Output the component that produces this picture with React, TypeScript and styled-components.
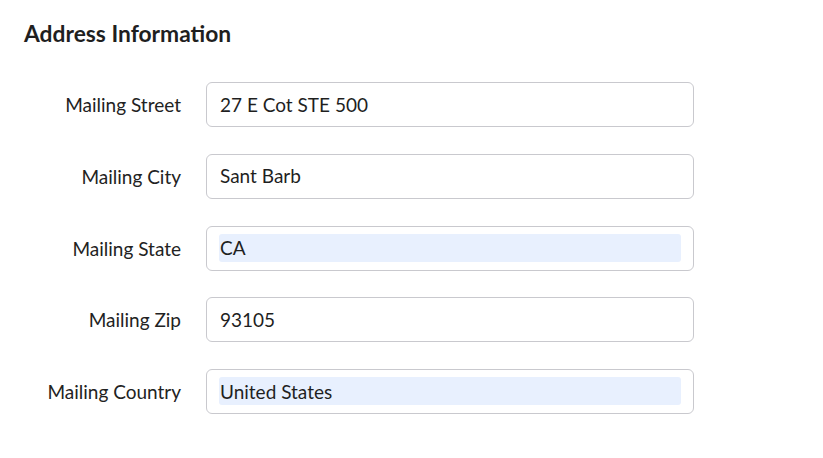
import React from "react";
import styled, { createGlobalStyle } from "styled-components";

const GlobalStyle = createGlobalStyle`
  body {
    margin: 0;
    background: #ffffff;
    font-family: Lato, "Open Sans", sans-serif;
    color: #1f1f1f;
  }
`;

const Section = styled.section`
  padding: 20px 24px 0 24px;
`;

const Heading = styled.h2`
  margin: 0 0 36px 0;
  font-size: 22.8px;
  font-weight: 700;
  color: #1f1f1f;
  line-height: 26px;
`;

const Form = styled.div`
  display: grid;
  grid-template-columns: 157px 488px;
  column-gap: 25px;
  row-gap: 26.8px;
  align-items: center;
`;

const Label = styled.label`
  text-align: right;
  font-size: 19px;
  color: #222;
  white-space: nowrap;
`;

const Field = styled.div`
  box-sizing: border-box;
  height: 45px;
  border: 1px solid #c9c9ce;
  border-radius: 6px;
  padding: 7px 12px 8px 12px;
  display: flex;
  align-items: center;
`;

const Input = styled.input<{ $filled?: boolean }>`
  box-sizing: border-box;
  width: 100%;
  height: 28px;
  border: none;
  outline: none;
  border-radius: 3px;
  padding: 0 1px;
  font-family: Lato, "Open Sans", sans-serif;
  font-size: 19px;
  color: #1f1f1f;
  background: ${(p) => (p.$filled ? "#e8f0fe" : "transparent")};
`;

const rows = [
  { label: "Mailing Street", value: "27 E Cot STE 500" },
  { label: "Mailing City", value: "Sant Barb" },
  { label: "Mailing State", value: "CA", filled: true },
  { label: "Mailing Zip", value: "93105" },
  { label: "Mailing Country", value: "United States", filled: true },
];

export default function App() {
  return (
    <>
      <GlobalStyle />
      <Section>
        <Heading>Address Information</Heading>
        <Form>
          {rows.map((r) => (
            <React.Fragment key={r.label}>
              <Label>{r.label}</Label>
              <Field>
                <Input $filled={r.filled} defaultValue={r.value} />
              </Field>
            </React.Fragment>
          ))}
        </Form>
      </Section>
    </>
  );
}
